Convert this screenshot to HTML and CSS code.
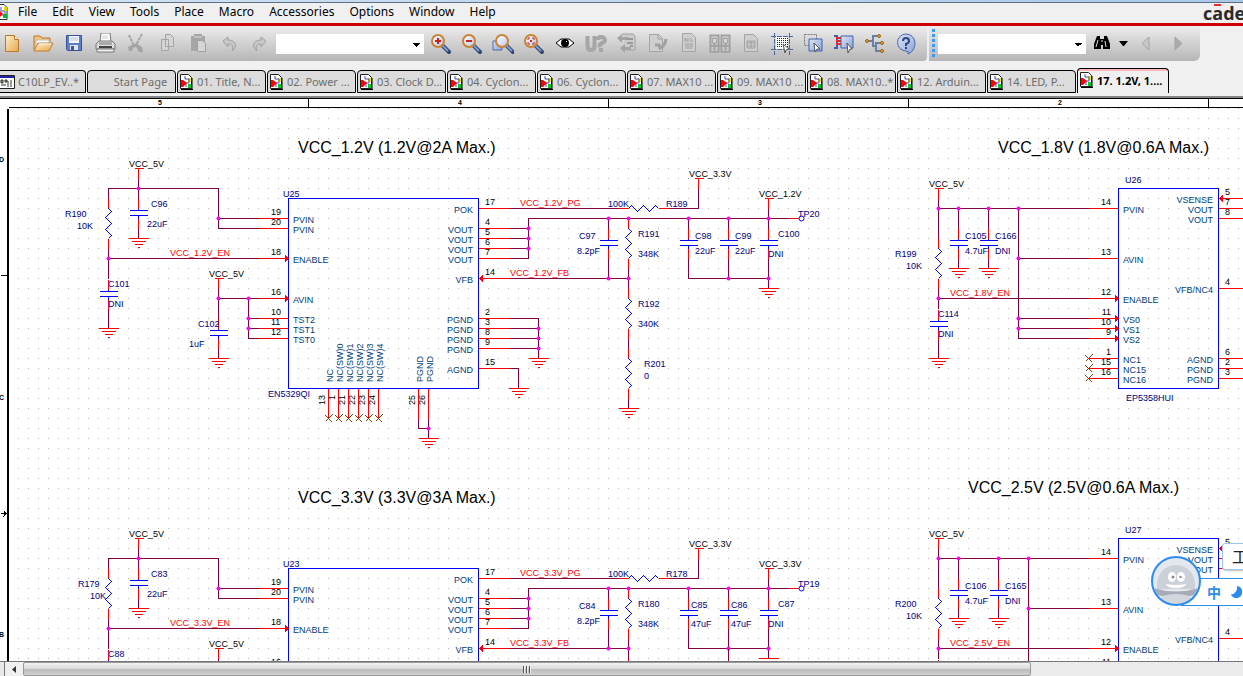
FILE: index.html
```html
<!DOCTYPE html>
<html lang="en">
<head>
<meta charset="utf-8">
<title>Schematic editor</title>
<link rel="stylesheet" href="styles.css">
</head>
<body>
<svg class="defs" aria-hidden="true">
  <defs>
    <linearGradient id="lens" x1="0" y1="0" x2="1" y2="1"><stop offset="0" stop-color="#fff"/><stop offset="1" stop-color="#b8c8ea"/></linearGradient>
    <linearGradient id="blue" x1="0" y1="0" x2="1" y2="1"><stop offset="0" stop-color="#dde6f8"/><stop offset="1" stop-color="#8aa2d4"/></linearGradient>
    <linearGradient id="tan" x1="0" y1="0" x2="1" y2="1"><stop offset="0" stop-color="#fff0c8"/><stop offset="1" stop-color="#e6a850"/></linearGradient>
    <g id="mag"><path d="M12 12l7 7" stroke="#31466f" stroke-width="4" stroke-linecap="round"/><path d="M12 12l6 6" stroke="#7f9bd0" stroke-width="2"/><circle cx="8" cy="8" r="6" fill="url(#lens)" stroke="#c98331" stroke-width="2"/></g>
    <symbol id="page" viewBox="0 0 13 16"><path d="M.5.5h8l3 3v11H.5z" fill="#fff" stroke="#222"/><path d="M12 4v11.500M1 15.500h12" stroke="#000" stroke-width="1"/><path d="M8 4h3v4H8z" fill="#ee0"/><path d="M8 10h3v4H8z" fill="#0c2"/><path d="M5 2v3h4v4H6v4" fill="none" stroke="#44c"/><path d="M1 6h2l4 3-4 4H1z" fill="#f00"/></symbol>
  </defs>
</svg>
<div class="app">
  <div class="strip"></div>
  <header class="menubar">
    <svg class="appicon" viewBox="0 0 8 16"><path d="M0 .5h4l3 3v12H0" fill="#fff" stroke="#333"/><path d="M1 3v4h4v4H2" fill="none" stroke="#44c"/><path d="M4 3h3v4H4z" fill="#dd0"/><path d="M3 10h4v4H3z" fill="#0b3"/><path d="M0 7l3 3-3 3z" fill="#f00"/></svg>
    <nav class="menu">
      <button>File</button><button>Edit</button><button>View</button><button>Tools</button><button>Place</button><button>Macro</button><button>Accessories</button><button>Options</button><button>Window</button><button>Help</button>
    </nav>
    <div class="logo">cadence<span class="macron"></span></div>
  </header>
  <div class="toolrow">
    <div class="toolbar main">
      <button class="tool" aria-label="New"><svg viewBox="0 0 22 22"><path d="M4.500 2.500h9l4 4v12h-13z" fill="url(#tan)" stroke="#b67a2c"/><path d="M13.500 2.500v4h4" fill="#fff4d8" stroke="#b67a2c"/></svg></button>
      <button class="tool" aria-label="Open"><svg viewBox="0 0 22 22"><path d="M2 17V3h6l2 2h8v4" fill="#f3c47c" stroke="#b8742a"/><path d="M4 7h13v5H4z" fill="#fff" stroke="#bbb"/><path d="M2 18L6 10h15l-4 8z" fill="url(#tan)" stroke="#c07c30"/><path d="M7 11h12" stroke="#fff"/></svg></button>
      <button class="tool" aria-label="Save"><svg viewBox="0 0 22 22"><path d="M3.500 2.500h15v15h-14l-1-1z" fill="#5f7fc4" stroke="#34539a"/><path d="M6 3h10v7H6z" fill="#f4f6fb"/><path d="M7 5h8M7 7h8" stroke="#bcc6da"/><path d="M7 12h8v5H7z" fill="#dfe5f2"/><path d="M8 13h3v4H8z" fill="#3d5794"/></svg></button>
      <button class="tool" aria-label="Print"><svg viewBox="0 0 22 22"><path d="M6 9L7 0h9l1 9z" fill="#fff" stroke="#777"/><path d="M8 3h6M8 5h6" stroke="#ccc"/><path d="M2 16v-5l3-3h13l3 3v5z" fill="#ddd" stroke="#777"/><path d="M5 9h13v3H5z" fill="#aaa"/><path d="M3 16h17v3H3z" fill="#f4f4f4" stroke="#777"/><path d="M5 14h13" stroke="#444" stroke-width="2"/></svg></button>
      <button class="tool off" aria-label="Cut"><svg viewBox="0 0 22 22"><path d="M4 2l4 9 4 1M17 1l-6 11" stroke="#a4a4a4" stroke-width="2" stroke-dasharray="3 1" fill="none"/><path d="M3 14l6-3h3l5 3 1 5h-4l-3-5-3 1-1 3H4z" fill="#a4a4a4"/></svg></button>
      <button class="tool off" aria-label="Copy"><svg viewBox="0 0 22 22"><path d="M5.500 6.500h7v11h-7z M9.500 1.500h5l3 3v9h-8z" fill="#d4d4d4" stroke="#a4a4a4"/></svg></button>
      <button class="tool off" aria-label="Paste"><svg viewBox="0 0 22 22"><path d="M4 3h3V1h8v2h3v15H4z" fill="#a6a6a6"/><path d="M7 4h8" stroke="#ddd"/><path d="M10.500 7.500h5l3 3v8h-8z" fill="#d6d6d6" stroke="#a0a0a0"/></svg></button>
      <button class="tool off" aria-label="Undo"><svg viewBox="0 0 22 22"><path d="M5 8l5-4v3c8 0 10 7 4 11 2-5 0-7-4-7v3z" fill="#c8c8c8" stroke="#a0a0a0"/></svg></button>
      <button class="tool off" aria-label="Redo"><svg viewBox="0 0 22 22"><path d="M17 8l-5-4v3C4 7 2 14 8 18c-2-5 0-7 4-7v3z" fill="#c8c8c8" stroke="#a0a0a0"/></svg></button>
      <select class="combo device" aria-label="Part"><option></option></select>
      <button class="tool" aria-label="Zoom in"><svg viewBox="0 0 22 22"><use href="#mag"/><path d="M8 5v6M5 8h6" stroke="#c22" stroke-width="2"/></svg></button>
      <button class="tool" aria-label="Zoom out"><svg viewBox="0 0 22 22"><use href="#mag"/><path d="M5 8h6" stroke="#c22" stroke-width="2"/></svg></button>
      <button class="tool" aria-label="Zoom area"><svg viewBox="0 0 22 22"><path d="M1 8h9v9H1z" fill="url(#blue)" stroke="#4c6cae"/><use href="#mag" x="2"/></svg></button>
      <button class="tool" aria-label="Zoom all"><svg viewBox="0 0 22 22"><use href="#mag"/><path d="M5 7V5h2M9 5h2v2M11 9v2H9M7 11H5V9" stroke="#c22" fill="none"/><path d="M7 7h2v2H7z" fill="#c22"/></svg></button>
      <button class="tool" aria-label="View"><svg viewBox="0 0 22 22"><path d="M2 10l5-4h8l5 4-5 4H7z" fill="#fff" stroke="#000"/><circle cx="11" cy="10" r="4" fill="#000"/><path d="M12 8h1v1h-1z" fill="#fff"/></svg></button>
      <button class="tool off" aria-label="Annotate"><svg viewBox="0 0 22 22"><path d="M2.500 3v10q0 4 3.500 4t3.500-4V3M13 7q0-3 3-3t4 3q0 2-3 3t-2 4M14 17h4" fill="none" stroke="#a6a6a6" stroke-width="4"/></svg></button>
      <button class="tool off" aria-label="Back annotate"><svg viewBox="0 0 22 22"><path d="M6 1h11l2 2v14h-9" fill="#ccc" stroke="#a0a0a0"/><path d="M1 5l5-4v3h6v3H6v3zM4 15l5-4v3h6v3H9v3z" fill="#a4a4a4"/><path d="M11 6h6M11 10h6M14 13h3" stroke="#999" stroke-width="2"/></svg></button>
      <button class="tool off" aria-label="Design rules check"><svg viewBox="0 0 22 22"><path d="M2.500 1.500h9l4 4v13h-13z" fill="#cfcfcf" stroke="#a4a4a4"/><path d="M11 1v5h5" fill="none" stroke="#a4a4a4"/><path d="M8 12h4l1 3q5-2 6-9" fill="none" stroke="#a0a0a0" stroke-width="3"/></svg></button>
      <button class="tool off" aria-label="Netlist"><svg viewBox="0 0 22 22"><path d="M4.500 .5h9l4 4v14h-13z" fill="#cfcfcf" stroke="#a4a4a4"/><path d="M7 9V5l3 4V5M12 6h2M12 8h3M7 11h8M7 13h8M7 15h8" fill="none" stroke="#a0a0a0"/></svg></button>
      <button class="tool off" aria-label="Cross reference"><svg viewBox="0 0 24 22"><path d="M1.500 1.500h9v18h-9zM13.500 1.500h9v18h-9z" fill="#c8c8c8" stroke="#a0a0a0" stroke-width="2"/><path d="M4 5h4v5H4zM16 5h4v5h-4z" fill="#ddd" stroke="#999"/><path d="M1 13h21M6 10v8M18 10v8" stroke="#a0a0a0" stroke-width="2"/></svg></button>
      <button class="tool off" aria-label="Bill of materials"><svg viewBox="0 0 22 22"><path d="M4.500 1.500h9l4 4v13h-13z" fill="#cfcfcf" stroke="#a4a4a4"/><path d="M7 8h8v7H7zM7 10h8M7 13h8M11 8v7" fill="none" stroke="#a0a0a0"/></svg></button>
      <button class="tool" aria-label="Snap to grid"><svg viewBox="0 0 22 22"><path d="M5 4h12v12H5z" fill="#fff"/><path d="M3.500 0v22M18.500 0v22M0 3.500h22M0 16.500h22" stroke="#4568a4" stroke-dasharray="5 1"/><path d="M6.500 5v10M8.500 5v10M10.500 5v10M12.500 5v10M14.500 5v10M16.500 5v10" stroke="#222" stroke-dasharray="1 1"/><path d="M12 11l6 5-3 1-1 3z" fill="#fff" stroke="#555"/></svg></button>
      <button class="tool" aria-label="Area select"><svg viewBox="0 0 22 22"><path d="M2.500 1.500h12v11h-12z" fill="none" stroke="#777" stroke-dasharray="2 1"/><path d="M7 6h13v12H7z" fill="url(#blue)" stroke="#3f62aa"/><path d="M12 10l6 6h-3l-2 3z" fill="#fff" stroke="#555"/></svg></button>
      <button class="tool" aria-label="Drag connected"><svg viewBox="0 0 22 22"><path d="M1 3h3v12H1" fill="none" stroke="#3f62aa" stroke-width="2"/><path d="M3 5h6M3 8h6M3 11h6" stroke="#e22" stroke-width="2"/><path d="M8 3h12v12H8z" fill="url(#blue)" stroke="#3f62aa"/><path d="M14 10l5 6h-2l-2 4z" fill="#fff" stroke="#555"/></svg></button>
      <button class="tool" aria-label="Hierarchy"><svg viewBox="0 0 22 22"><path d="M3 8h6M15 3H9v10h3v5h6M12 13v-3h6" fill="none" stroke="#6a7fa8" stroke-width="2"/><g fill="#f2a428" stroke="#9a6010"><circle cx="3" cy="8" r="1.500"/><circle cx="15" cy="3" r="1.500"/><circle cx="18" cy="10" r="1.500"/><circle cx="18" cy="18" r="1.500"/></g></svg></button>
      <button class="tool" aria-label="Help"><svg viewBox="0 0 22 22"><path d="M11 1a8 8 0 1 0 0 17q3 0 2 3 7-3 7-11a9 9 0 0 0-9-9z" fill="url(#blue)" stroke="#4a68a8"/><path d="M8 8q0-3 3-3t3 3q0 2-3 3v2M11 14v2" fill="none" stroke="#2c4680" stroke-width="2"/></svg></button>
    </div>
    <div class="toolbar find">
      <span class="grip"></span>
      <select class="combo search" aria-label="Search"><option></option></select>
      <button class="tool" aria-label="Find"><svg viewBox="0 0 22 22"><path d="M6 3h3v3h4V3h3l3 8v5h-7v-4h-2v4H3v-5z" fill="#000"/><path d="M7 7l-2 7M14 8l1 6" stroke="#ddd"/><path d="M10 8h2" stroke="#ddd"/></svg></button>
      <button class="drop" aria-label="Find options"><svg viewBox="0 0 9 6"><path d="M0 0h9L5 5H4z"/></svg></button>
      <button class="tool off" aria-label="Previous"><svg viewBox="0 0 22 22"><path d="M14 4v13l-7-6.500z" fill="#c8c8c8" stroke="#a4a4a4"/></svg></button>
      <button class="tool off next" aria-label="Next"><svg viewBox="0 0 22 22"><path d="M7 4v13l7-6.500z" fill="#ababab" stroke="#a4a4a4"/></svg></button>
    </div>
  </div>
  <div class="tabs">
    <button class="tab first"><svg class="picon wide" viewBox="0 0 15 14"><path d="M0 .5h14.500v13H0" fill="#fff" stroke="#222"/><path d="M0 1h14v2H0z" fill="#22a"/><path d="M1 5h2v3H1zM5 5h2v2H5zM8 6v6M11 5v7M1 10h5" stroke="#333" fill="#aa6"/></svg><span>C10LP_EV..*</span></button>
    <button class="tab start"><span>Start Page</span></button>
    <button class="tab"><svg class="picon"><use href="#page"/></svg><span>01. Title, N...</span></button>
    <button class="tab"><svg class="picon"><use href="#page"/></svg><span>02. Power ...</span></button>
    <button class="tab"><svg class="picon"><use href="#page"/></svg><span>03. Clock D...</span></button>
    <button class="tab"><svg class="picon"><use href="#page"/></svg><span>04. Cyclon...</span></button>
    <button class="tab"><svg class="picon"><use href="#page"/></svg><span>06. Cyclon...</span></button>
    <button class="tab"><svg class="picon"><use href="#page"/></svg><span>07. MAX10 ...</span></button>
    <button class="tab"><svg class="picon"><use href="#page"/></svg><span>09. MAX10 ...</span></button>
    <button class="tab"><svg class="picon"><use href="#page"/></svg><span>08. MAX10..*</span></button>
    <button class="tab"><svg class="picon"><use href="#page"/></svg><span>12. Arduin...</span></button>
    <button class="tab"><svg class="picon"><use href="#page"/></svg><span>14. LED, P...</span></button>
    <button class="tab active"><svg class="picon"><use href="#page"/></svg><span>17. 1.2V, 1....</span></button>
  </div>
  <main class="sheet">
    <svg class="drawing" role="img" aria-label="Power supply schematic">
      <defs>
        <pattern id="grid" x="8" y="8" width="10" height="10" patternUnits="userSpaceOnUse"><rect width="1" height="1" fill="#b4b4b4"/></pattern>
        <g id="pwr" class="pin"><path d="M-4 0H5M0 0V10"/></g>
        <g id="gnd" class="pin"><path d="M-10 0H10M-7 3H7M-4 6H4M-1 9H1"/></g>
        <g id="cap"><path class="pin" d="M0 0V10M0 20V30"/><path class="part" d="M-9 12H9M-9 17H9M0 10V12M0 17V20"/></g>
        <g id="res"><path class="pin" d="M0 0V10M0 40V50"/><path class="part" d="M0 10L3 13L-3 19L3 25L-3 31L3 37L0 40"/></g>
        <path id="in" class="tip" d="M0 0l-4-4v8z"/>
        <path id="out" class="tip" d="M0 0l4-4v8z"/>
        <path id="nc" class="nc" d="M-3-3L4 4M-3 3L4-4"/>
        <circle id="dot" class="dot" r="2"/>
        <g id="buck">
          <path class="wire" d="M108 198V188H218V228H258M218 218H258M138 178V198M138 228V238M108 248V278M108 258H258M108 308V328M218 288V318M218 348V358M218 298H258M248 298V338H258M248 318H258M248 328H258
            M508 208H618M668 208H698V188M508 228H528M508 238H528M508 248H528M508 258H528V218H788M768 208V228M508 278H628M608 218V228M608 258V278M628 268V288M628 338V348M628 398V408M688 218V228M688 258V278H768M728 218V228M728 258V278M768 258V288
            M508 318H538V358M508 328H538M508 338H538M508 348H538M508 368H518V388M418 418V428H428M428 418V438"/>
          <path class="pin" d="M258 218H288M258 228H288M258 258H288M258 298H288M258 318H288M258 328H288M258 338H288M478 208H508M478 228H508M478 238H508M478 248H508M478 258H508M478 278H508M478 318H508M478 328H508M478 338H508M478 348H508M478 368H508M788 218H798M328 388V418M338 388V418M348 388V418M358 388V418M368 388V418M378 388V418M418 388V418M428 388V418"/>
          <rect class="part" x="288" y="198" width="190" height="190"/>
          <circle class="part round" cx="801" cy="218" r="2.500"/>
          <use href="#pwr" x="138" y="168"/><use href="#pwr" x="218" y="278"/><use href="#pwr" x="698" y="178"/><use href="#pwr" x="768" y="198"/>
          <use href="#gnd" x="138" y="238"/><use href="#gnd" x="108" y="328"/><use href="#gnd" x="218" y="358"/><use href="#gnd" x="428" y="438"/><use href="#gnd" x="538" y="358"/><use href="#gnd" x="518" y="388"/><use href="#gnd" x="628" y="408"/><use href="#gnd" x="768" y="288"/>
          <use href="#cap" x="138" y="198"/><use href="#cap" x="108" y="279"/><use href="#cap" x="218" y="318"/><use href="#cap" x="608" y="228"/><use href="#cap" x="688" y="228"/><use href="#cap" x="728" y="228"/><use href="#cap" x="768" y="228"/>
          <use href="#res" x="108" y="198"/><use href="#res" x="628" y="218"/><use href="#res" x="628" y="288"/><use href="#res" x="628" y="348"/>
          <use href="#res" transform="translate(618 208) rotate(-90)"/>
          <use href="#in" x="288" y="258"/><use href="#in" x="288" y="298"/><use href="#out" x="478" y="278"/>
          <use href="#nc" x="328" y="418"/><use href="#nc" x="338" y="418"/><use href="#nc" x="348" y="418"/><use href="#nc" x="358" y="418"/><use href="#nc" x="368" y="418"/><use href="#nc" x="378" y="418"/>
          <use href="#dot" x="138" y="188"/><use href="#dot" x="218" y="218"/><use href="#dot" x="108" y="258"/><use href="#dot" x="218" y="298"/><use href="#dot" x="248" y="298"/><use href="#dot" x="248" y="318"/><use href="#dot" x="248" y="328"/>
          <use href="#dot" x="528" y="228"/><use href="#dot" x="528" y="238"/><use href="#dot" x="528" y="248"/><use href="#dot" x="608" y="218"/><use href="#dot" x="628" y="218"/><use href="#dot" x="688" y="218"/><use href="#dot" x="728" y="218"/><use href="#dot" x="768" y="218"/><use href="#dot" x="608" y="278"/><use href="#dot" x="628" y="278"/><use href="#dot" x="728" y="278"/><use href="#dot" x="768" y="278"/><use href="#dot" x="538" y="328"/><use href="#dot" x="538" y="338"/><use href="#dot" x="538" y="348"/><use href="#dot" x="428" y="428"/>
        </g>
        <g id="ldo">
          <path class="wire" d="M938 198V238M938 208H1088M958 208V228M958 258V268M938 288V308M938 298H1088M938 338V358"/>
          <path class="pin" d="M1088 208H1118M1088 258H1118M1088 298H1118M1088 318H1118M1088 328H1118M1088 338H1118M1088 358H1118M1088 368H1118M1088 378H1118M1218 198H1248M1218 208H1248M1218 218H1248M1218 288H1248M1218 358H1248M1218 368H1248M1218 378H1248"/>
          <rect class="part" x="1118" y="188" width="100" height="200"/>
          <use href="#pwr" x="938" y="188"/><use href="#cap" x="958" y="228"/><use href="#gnd" x="958" y="268"/><use href="#res" x="938" y="238"/><use href="#cap" x="938" y="309"/><use href="#gnd" x="938" y="358"/>
          <use href="#in" x="1118" y="298"/><use href="#in" x="1118" y="318"/><use href="#in" x="1118" y="328"/><use href="#in" x="1118" y="338"/><use href="#out" x="1218" y="198"/>
          <use href="#nc" x="1088" y="358"/><use href="#nc" x="1088" y="368"/><use href="#nc" x="1088" y="378"/>
          <use href="#dot" x="938" y="208"/><use href="#dot" x="958" y="208"/><use href="#dot" x="938" y="298"/>
        </g>
        <g id="buckText">
          <g class="t num"><text x="271" y="215">19</text><text x="271" y="225">20</text><text x="271" y="255">18</text><text x="271" y="295">16</text><text x="271" y="315">10</text><text x="271" y="325">11</text><text x="271" y="335">12</text><text x="485" y="205">17</text><text x="485" y="225">4</text><text x="485" y="235">5</text><text x="485" y="245">6</text><text x="485" y="255">7</text><text x="485" y="275">14</text><text x="485" y="315">2</text><text x="485" y="325">3</text><text x="485" y="335">8</text><text x="485" y="345">9</text><text x="485" y="365">15</text></g>
          <g class="t name"><text x="293" y="223">PVIN</text><text x="293" y="233">PVIN</text><text x="293" y="263">ENABLE</text><text x="293" y="303">AVIN</text><text x="293" y="323">TST2</text><text x="293" y="333">TST1</text><text x="293" y="343">TST0</text></g>
          <g class="t name end"><text x="473" y="213">POK</text><text x="473" y="233">VOUT</text><text x="473" y="243">VOUT</text><text x="473" y="253">VOUT</text><text x="473" y="263">VOUT</text><text x="473" y="283">VFB</text><text x="473" y="323">PGND</text><text x="473" y="333">PGND</text><text x="473" y="343">PGND</text><text x="473" y="353">PGND</text><text x="473" y="373">AGND</text></g>
          <g class="t"><text x="129" y="167">VCC_5V</text><text x="209" y="277">VCC_5V</text><text x="689" y="177">VCC_3.3V</text></g>
          <g class="t ref"><text x="147" y="227">22uF</text><text x="608" y="207">100K</text><text x="577" y="254">8.2pF</text><text x="638" y="257">348K</text><text x="768" y="257">DNI</text></g>
        </g>
        <g id="ldoText">
          <g class="t"><text x="929" y="187">VCC_5V</text></g>
          <g class="t num end"><text x="1111" y="205">14</text><text x="1111" y="255">13</text><text x="1111" y="295">12</text><text x="1111" y="315">11</text><text x="1111" y="325">10</text><text x="1111" y="335">9</text><text x="1111" y="355">1</text><text x="1111" y="365">15</text><text x="1111" y="375">16</text></g>
          <g class="t num"><text x="1225" y="195">5</text><text x="1225" y="205">7</text><text x="1225" y="215">8</text><text x="1225" y="285">4</text><text x="1225" y="355">6</text><text x="1225" y="365">2</text><text x="1225" y="375">3</text></g>
          <g class="t name"><text x="1123" y="213">PVIN</text><text x="1123" y="263">AVIN</text><text x="1123" y="303">ENABLE</text><text x="1123" y="323">VS0</text><text x="1123" y="333">VS1</text><text x="1123" y="343">VS2</text><text x="1123" y="363">NC1</text><text x="1123" y="373">NC15</text><text x="1123" y="383">NC16</text></g>
          <g class="t name end"><text x="1213" y="203">VSENSE</text><text x="1213" y="213">VOUT</text><text x="1213" y="223">VOUT</text><text x="1213" y="293">VFB/NC4</text><text x="1213" y="363">AGND</text><text x="1213" y="373">PGND</text><text x="1213" y="383">PGND</text></g>
          <g class="t ref"><text x="906" y="269">10K</text><text x="965" y="254">4.7uF</text><text x="995" y="254">DNI</text></g>
        </g>
      </defs>
      <g transform="translate(0 -98)">
        <rect x="9" y="108" width="100%" height="100%" fill="url(#grid)"/>
        <g class="t mark"><text x="158" y="105">5</text><text x="458" y="105">4</text><text x="758" y="105">3</text><text x="1058" y="105">2</text><text x="-1" y="162">D</text><text x="-1" y="400">C</text><text x="-1" y="637">B</text></g>
      </g>
      <g transform="translate(0.5 -97.5)">
        <path class="frame" d="M308 98V107M608 98V107M908 98V107M1208 98V107M0 275H7M8 107H4000M0 513H7"/>
        <path class="bar" d="M7 108V2000"/>
        <path d="M7 513l-4-3v6z"/>
        <use href="#buck"/>
        <g transform="translate(0 370)"><use href="#buck"/></g>
        <path class="wire" d="M728 648V678"/>
        <use href="#ldo"/>
        <g transform="translate(0 350)"><use href="#ldo"/></g>
        <path class="wire" d="M988 208V228M988 258V268M1018 208V338H1088M1018 258H1088M1018 318H1088M1018 328H1088M998 558V578M998 608V618M1028 558V688H1088M1028 608H1088"/>
        <use href="#cap" x="988" y="228"/><use href="#gnd" x="988" y="268"/><use href="#cap" x="998" y="578"/><use href="#gnd" x="998" y="618"/>
        <use href="#dot" x="988" y="208"/><use href="#dot" x="1018" y="208"/><use href="#dot" x="1018" y="258"/><use href="#dot" x="1018" y="318"/><use href="#dot" x="1018" y="328"/><use href="#dot" x="998" y="558"/><use href="#dot" x="1028" y="558"/><use href="#dot" x="1028" y="608"/>
      </g>
      <g transform="translate(0 -98)">
        <use href="#buckText"/><g transform="translate(0 370)"><use href="#buckText"/></g>
        <use href="#ldoText"/>
        <g transform="translate(0 350)"><g class="t"><text x="929" y="187">VCC_5V</text></g>
          <g class="t num end"><text x="1111" y="205">14</text><text x="1111" y="255">13</text><text x="1111" y="295">12</text><text x="1111" y="315">11</text></g>
          <g class="t num"><text x="1225" y="195">5</text><text x="1225" y="285">4</text></g>
          <g class="t name"><text x="1123" y="213">PVIN</text><text x="1123" y="263">AVIN</text><text x="1123" y="303">ENABLE</text></g>
          <g class="t name end"><text x="1213" y="203">VSENSE</text><text x="1213" y="213">VOUT</text><text x="1213" y="223">VOUT</text><text x="1213" y="293">VFB/NC4</text></g>
          <g class="t ref"><text x="906" y="269">10K</text><text x="965" y="254">4.7uF</text><text x="1005" y="254">DNI</text></g></g>
        <g class="title"><text x="298" y="153">VCC_1.2V (1.2V@2A Max.)</text><text x="998" y="153">VCC_1.8V (1.8V@0.6A Max.)</text><text x="298" y="503">VCC_3.3V (3.3V@3A Max.)</text><text x="968" y="493">VCC_2.5V (2.5V@0.6A Max.)</text></g>
        <g class="t"><text x="759" y="197">VCC_1.2V</text><text x="759" y="567">VCC_3.3V</text></g>
        <g class="t net"><text x="170" y="256">VCC_1.2V_EN</text><text x="520" y="206">VCC_1.2V_PG</text><text x="510" y="276">VCC_1.2V_FB</text><text x="950" y="296">VCC_1.8V_EN</text><text x="170" y="626">VCC_3.3V_EN</text><text x="520" y="576">VCC_3.3V_PG</text><text x="510" y="646">VCC_3.3V_FB</text><text x="950" y="646">VCC_2.5V_EN</text></g>
        <g class="t ref">
          <text x="283" y="197">U25</text><text x="268" y="397">EN5329QI</text><text x="65" y="217">R190</text><text x="77" y="229">10K</text><text x="151" y="207">C96</text><text x="108" y="287">C101</text><text x="108" y="307">DNI</text><text x="198" y="327">C102</text><text x="189" y="347">1uF</text>
          <text x="666" y="207">R189</text><text x="798" y="217">TP20</text><text x="638" y="237">R191</text><text x="579" y="239">C97</text><text x="695" y="239">C98</text><text x="695" y="254">22uF</text><text x="735" y="239">C99</text><text x="735" y="254">22uF</text><text x="778" y="237">C100</text><text x="638" y="307">R192</text><text x="638" y="327">340K</text><text x="644" y="367">R201</text><text x="644" y="379">0</text>
          <text x="1125" y="183">U26</text><text x="1126" y="401">EP5358HUI</text><text x="895" y="257">R199</text><text x="965" y="239">C105</text><text x="995" y="239">C166</text><text x="938" y="317">C114</text><text x="938" y="337">DNI</text>
          <text x="283" y="567">U23</text><text x="78" y="587">R179</text><text x="90" y="599">10K</text><text x="151" y="577">C83</text><text x="108" y="657">C88</text><text x="666" y="577">R178</text><text x="798" y="587">TP19</text><text x="638" y="607">R180</text><text x="579" y="609">C84</text><text x="691" y="608">C85</text><text x="691" y="627">47uF</text><text x="731" y="608">C86</text><text x="731" y="627">47uF</text><text x="778" y="607">C87</text>
          <text x="1125" y="533">U27</text><text x="895" y="607">R200</text><text x="965" y="589">C106</text><text x="1005" y="589">C165</text><text x="939" y="667">C113</text>
        </g>
        <g class="t num"><text transform="translate(325 405) rotate(-90)">13</text><text transform="translate(335 400) rotate(-90)">1</text><text transform="translate(345 405) rotate(-90)">21</text><text transform="translate(355 405) rotate(-90)">22</text><text transform="translate(365 405) rotate(-90)">23</text><text transform="translate(375 405) rotate(-90)">24</text><text transform="translate(415 405) rotate(-90)">25</text><text transform="translate(425 405) rotate(-90)">26</text></g>
        <g class="t name"><text transform="translate(333 382) rotate(-90)">NC</text><text transform="translate(343 382) rotate(-90)">NC(SW)0</text><text transform="translate(353 382) rotate(-90)">NC(SW)1</text><text transform="translate(363 382) rotate(-90)">NC(SW)2</text><text transform="translate(373 382) rotate(-90)">NC(SW)3</text><text transform="translate(383 382) rotate(-90)">NC(SW)4</text><text transform="translate(423 382) rotate(-90)">PGND</text><text transform="translate(433 382) rotate(-90)">PGND</text></g>
      </g>
    </svg>
    <div class="ime">
      <div class="tip-box">工</div>
      <div class="ime-bar"><button class="lang">中</button><button class="moon" aria-label="Half width"><svg viewBox="0 0 14 14"><path d="M8 0a7 7 0 1 1-7 10 8 8 0 0 0 7-10z" fill="#2b8cf0"/></svg></button></div>
      <svg class="face" viewBox="0 0 50 50"><defs><clipPath id="disc"><circle cx="25" cy="25" r="23"/></clipPath></defs><circle cx="25" cy="25" r="24" fill="#e4e7ec"/><g clip-path="url(#disc)"><path d="M6 33V28a19 19 0 0 1 38 0v5z" fill="#ccd0d9"/><path d="M2 32q23 7 46 0v6l-9 2v8H11v-8l-9-2z" fill="#a5acb8"/><path d="M11 40q14-4 28 0v9H11z" fill="#d3d6dd"/></g><g fill="#fff"><ellipse cx="21" cy="21" rx="4" ry="5"/><ellipse cx="30" cy="21" rx="4" ry="5"/><path d="M15 28q10 2 20 0-1 4-10 4t-10-4z"/></g><circle cx="22" cy="21" r="1.500" fill="#888"/><path d="M28 20l3 1-3 1" fill="none" stroke="#999"/><circle cx="25" cy="25" r="24" fill="none" stroke="#2b8cf0" stroke-width="2"/></svg>
    </div>
  </main>
  <div class="scroll">
    <span class="edge"></span>
    <button class="arrow" aria-label="Scroll left"><svg viewBox="0 0 4 7"><path d="M4 0v7L0 3.500z" fill="#333"/></svg></button>
    <div class="thumb"><i></i><i></i><i></i></div>
    <div class="track"></div>
  </div>
</div>
</body>
</html>
```
FILE: styles.css
```css
* { box-sizing: border-box; }
body { margin: 0; background: #f0f0f0; font-family: "Noto Sans", "Noto Sans CJK SC", sans-serif; overflow: hidden; }
button { border: 0; padding: 0; margin: 0; background: none; font: inherit; color: inherit; }
.defs { position: absolute; width: 0; height: 0; }
.app { height: 100vh; display: flex; flex-direction: column; }
.strip { height: 3px; flex: none; background: linear-gradient(90deg, #d3e2f2, #bcd3ea 60%, #a9c8e8); border-bottom: 1px solid #5d7186; }
.menubar { flex: none; height: 23px; display: flex; align-items: flex-start; border-bottom: 3px solid #cc0000; overflow: hidden; }
.appicon { width: 8px; height: 16px; margin-top: 1px; flex: none; }
.menu { display: flex; gap: 15px; padding-left: 10px; font-size: 12px; line-height: 18px; flex: none; }
.logo { position: relative; margin-left: auto; flex: none; width: 40px; white-space: nowrap; font: bold 18px/20px "Open Sans", sans-serif; color: #2a2a2a; }
.macron { position: absolute; left: 11px; top: 1px; width: 7px; height: 2px; background: #e03030; }

.toolrow { flex: none; display: flex; gap: 2px; height: 35px; overflow: hidden; }
.toolbar { display: flex; align-items: center; height: 35px; background: linear-gradient(#ececec, #d4d4d4 45%, #b6b6b6); border-radius: 0 0 4px 0; flex: none; }
.main { padding-right: 6px; }
.main > .tool:first-child { margin-left: -4px; }
.tool { width: 31px; height: 30px; display: flex; align-items: center; justify-content: center; flex: none; }
.tool svg { width: 22px; height: 22px; fill: none; }
.combo { appearance: none; width: 148px; height: 20px; border: 0; border-radius: 0; background: #fff conic-gradient(from -45deg at 50% 100%, #000 90deg, transparent 0) no-repeat right 4px top 9px / 8px 4px; }
.device { margin: 0 1px; }
.find { padding-left: 3px; border-radius: 0 0 6px 0; width: 271px; }
.grip { width: 3px; height: 29px; margin-right: 3px; background: repeating-linear-gradient(#3a9bff 0 3px, transparent 3px 5px); }
.drop { width: 13px; display: flex; justify-content: center; }
.drop svg { width: 9px; height: 6px; }
.find .next { margin-left: 2px; }

.tabs { flex: none; display: flex; align-items: flex-end; gap: 1px; padding-top: 8px; height: 35px; padding-bottom: 3px; overflow: hidden; font-size: 11px; color: #6c6c6c; }
.tab { width: 89px; height: 23px; flex: none; display: flex; align-items: center; gap: 4px; padding-left: 2px; border: 1px solid #000; border-radius: 4px 4px 0 0; background: #dcdcdc; white-space: nowrap; }
.tab.first { width: 86px; border-left: 0; border-top-left-radius: 0; padding-left: 0; gap: 3px; }
.tab.start { justify-content: center; padding-left: 18px; }
.tab.active { width: 92px; height: 25px; padding-bottom: 2px; border-bottom: 0; background: linear-gradient(#ffb8b8 2px, #f0f0f0 2px); font-weight: bold; color: #000; }
.picon { width: 13px; height: 16px; flex: none; }
.picon.wide { width: 15px; height: 14px; }

.sheet { position: relative; flex: 1; min-height: 0; border-top: 2px solid #858585; background: #fff; overflow: hidden; display: flex; }
.sheet::before { content: ""; position: absolute; left: 0; right: 0; top: 0; height: 1px; background: #000; }
.drawing { flex: 1; width: 100%; height: 100%; shape-rendering: crispEdges; }
.frame { stroke: #000; fill: none; }
.bar { stroke: #000; stroke-width: 2; }
.wire { stroke: #800040; fill: none; }
.pin { stroke: #ff0000; fill: none; }
.part { stroke: #0000ff; fill: none; }
.round { shape-rendering: auto; fill: #fff; }
.tip { fill: #ff0000; }
.nc { stroke: #804000; fill: none; }
.dot { fill: #ff00ff; shape-rendering: auto; }
.t { font: 9px "Liberation Sans", Arial, sans-serif; fill: #000; }
.ref { fill: #000080; }
.name { fill: #004080; }
.net { fill: #ff0000; }
.end { text-anchor: end; }
.mark { font-size: 7px; font-weight: bold; }
.title { font: 16px "Liberation Sans", Arial, sans-serif; }

.ime { position: absolute; right: 0; bottom: 55px; width: 92px; height: 64px; }
.tip-box { position: absolute; right: -8px; top: 1px; width: 29px; height: 27px; padding-left: 9px; background: #fff; border: 1px solid #9cc4ee; border-radius: 3px; box-shadow: 1px 1px 2px #bbb; font: 16px/24px "Noto Sans CJK SC", sans-serif; color: #222; overflow: hidden; }
.ime-bar { position: absolute; right: 0; top: 36px; left: 30px; height: 28px; display: flex; align-items: center; gap: 9px; padding-left: 25px; background: #fff; border: 1px solid #2b8cf0; border-right: 0; overflow: hidden; }
.lang { font: bold 14px/20px "Noto Sans CJK SC", sans-serif; color: #2b8cf0; flex: none; }
.moon { flex: none; display: flex; }
.moon svg { width: 12px; height: 12px; }
.face { position: absolute; left: 0; top: 14px; width: 50px; height: 50px; }

.scroll { flex: none; display: flex; height: 15px; background: #ebebeb; border-top: 1px solid #777; }
.edge { width: 5px; border-right: 1px solid #777; background: #e8e8e8; }
.arrow { width: 18px; display: flex; align-items: center; justify-content: center; background: #f0f0f0; }
.arrow svg { width: 4px; height: 7px; }
.thumb { flex: 1008; display: flex; gap: 1px; align-items: center; justify-content: center; border: 1px solid #999; border-radius: 2px; background: linear-gradient(#f2f2f2, #dcdcdc 45%, #bcbcbc 55%, #d0d0d0); }
.thumb i { width: 2px; height: 7px; background: #555; border-right: 1px solid #eee; }
.track { flex: 212; }
```
